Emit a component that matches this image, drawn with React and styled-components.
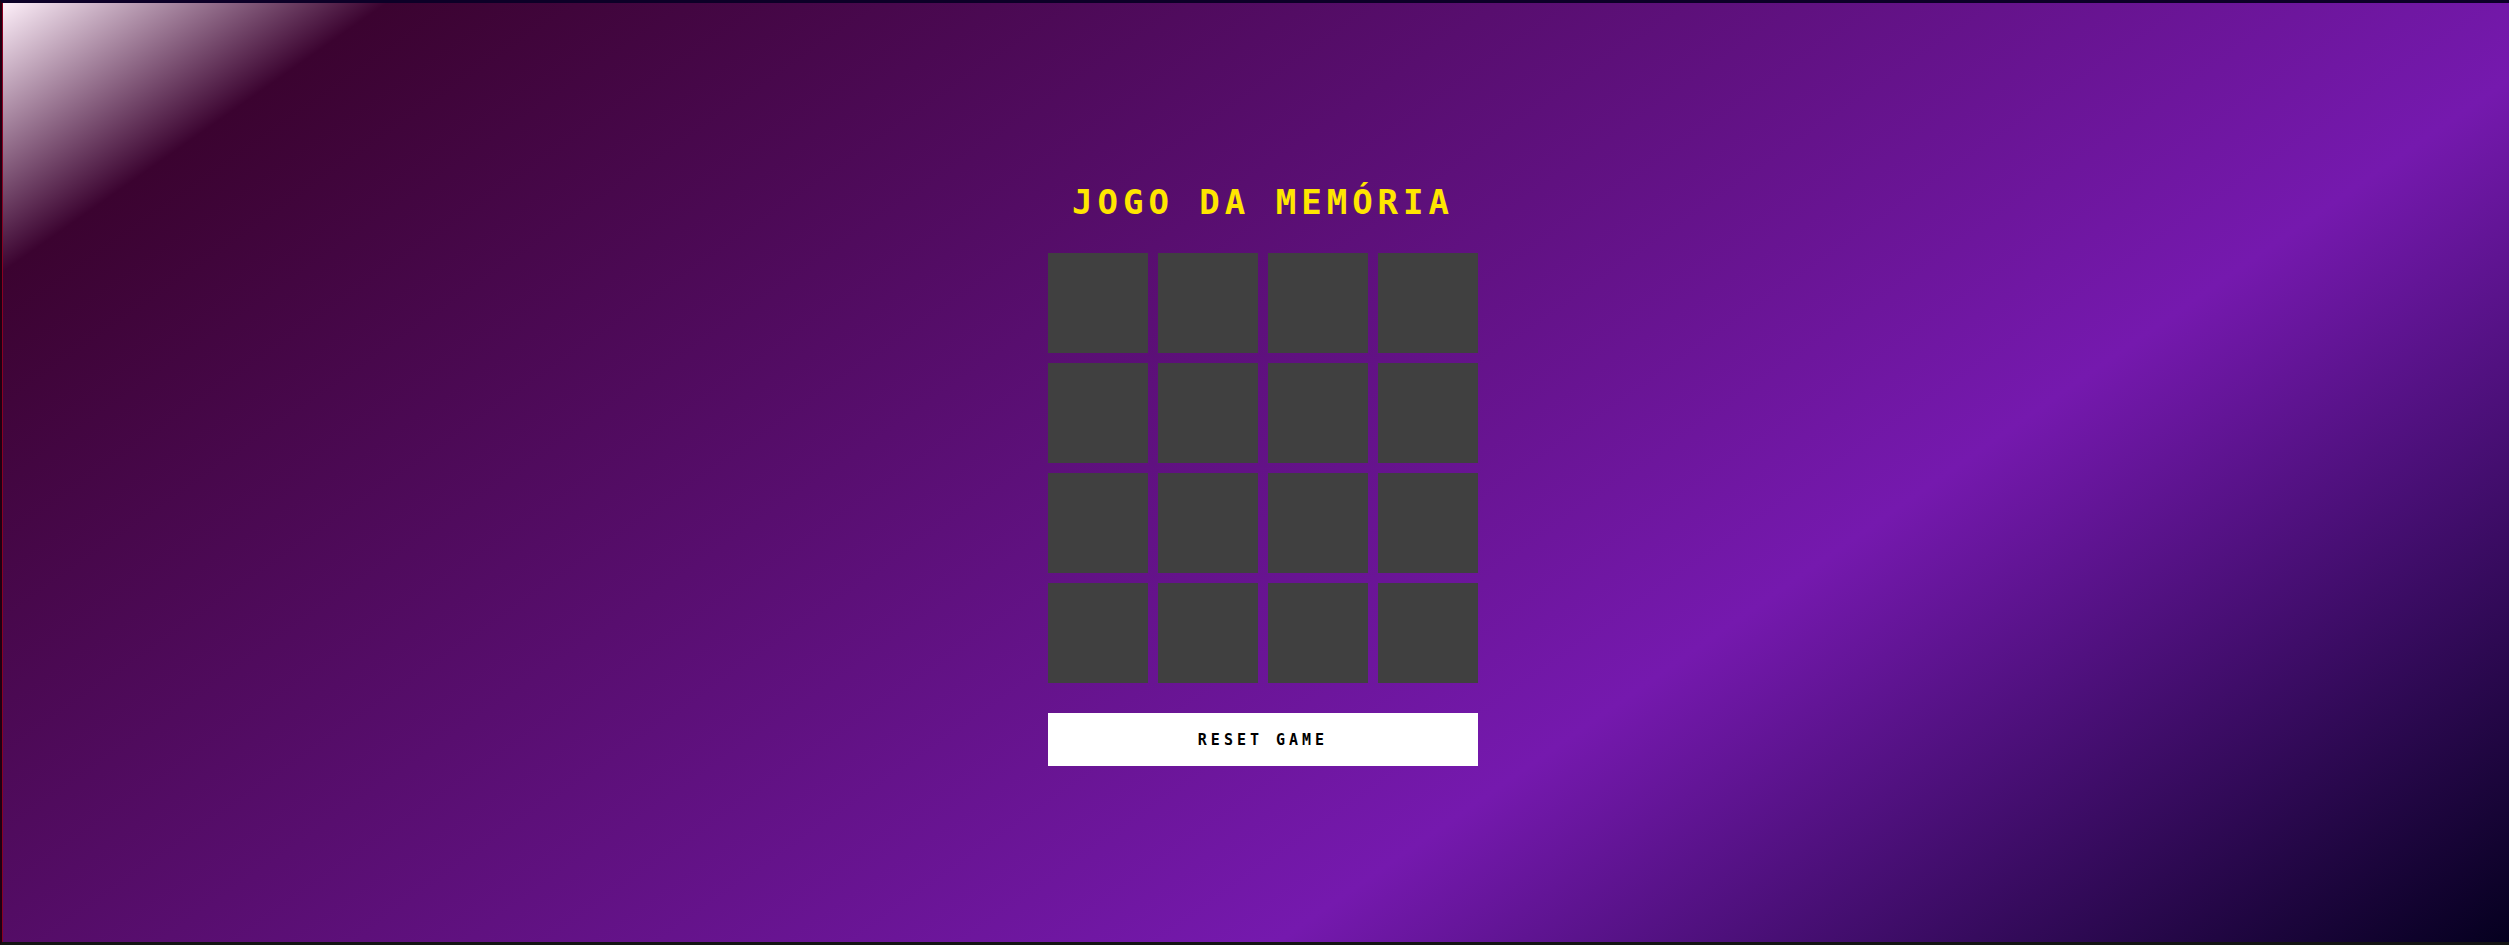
import React from 'react';
import styled, { createGlobalStyle } from 'styled-components';

const GlobalStyle = createGlobalStyle`
  * {
    box-sizing: border-box;
  }
  html,
  body {
    margin: 0;
    padding: 0;
    height: 100%;
  }
  body {
    font-family: 'DejaVu Sans Mono', 'Liberation Mono', monospace;
    overflow: hidden;
  }
`;

const Page = styled.main`
  display: flex;
  flex-direction: column;
  align-items: center;
  justify-content: center;
  min-height: 100vh;
  padding: 3px 0 0 15px;
  border-top: 3px solid #0c0027;
  border-left: 2px solid #1e0012;
  border-bottom: 3px solid #141414;
  box-shadow: inset 1px 0 0 #8a0022;
  background: linear-gradient(
    145deg,
    #fdeff9 0%,
    #3b0330 10%,
    #7519ae 68%,
    #05001f 100%
  );
`;

const Title = styled.h1`
  margin: 0 0 31px;
  font-size: 34px;
  font-weight: bold;
  letter-spacing: 5px;
  color: #ffe600;
`;

const Board = styled.div`
  display: grid;
  grid-template-columns: repeat(4, 100px);
  grid-auto-rows: 100px;
  gap: 10px;
  margin-bottom: 30px;
`;

const Card = styled.div`
  background-color: ${({ flipped }) => (flipped ? '#ffffff' : '#404040')};
  cursor: pointer;
`;

const ResetButton = styled.button`
  width: 430px;
  height: 53px;
  padding: 0;
  border: none;
  background-color: #fff;
  color: #000;
  font-family: 'DejaVu Sans Mono', 'Liberation Mono', monospace;
  font-size: 15px;
  font-weight: bold;
  letter-spacing: 4px;
  cursor: pointer;
`;

const cards = Array.from({ length: 16 }, (_, i) => i);

export default function App() {
  return (
    <>
      <GlobalStyle />
      <Page>
        <Title>JOGO DA MEMÓRIA</Title>
        <Board>
          {cards.map((id) => (
            <Card key={id} flipped={false} />
          ))}
        </Board>
        <ResetButton>RESET GAME</ResetButton>
      </Page>
    </>
  );
}
